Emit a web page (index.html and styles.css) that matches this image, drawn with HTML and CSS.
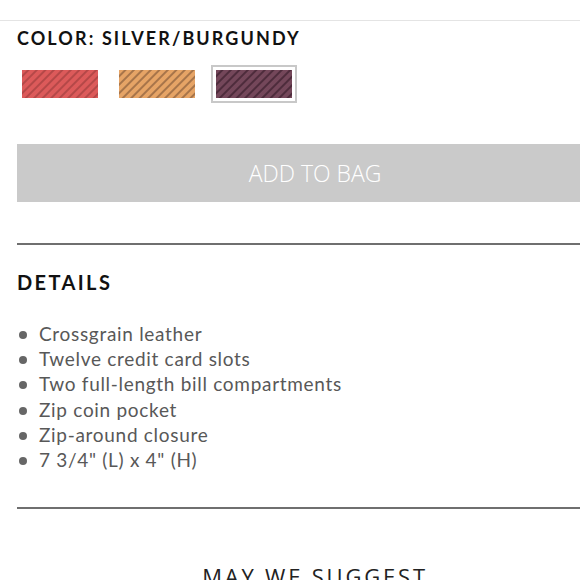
FILE: index.html
```html
<!DOCTYPE html>
<html lang="en">

<head>
    <meta charset="utf-8">
    <meta name="viewport" content="width=device-width, initial-scale=1.0">
    <title>Wallet - Silver/Burgundy</title>
    <link rel="stylesheet" href="styles.css">
</head>

<body>
    <div class="top-rule"></div>
    <div class="product">
        <h2 class="color-label">COLOR: SILVER/BURGUNDY</h2>
        <div class="swatches">
            <button class="swatch"><span class="chip chip-red"></span></button>
            <button class="swatch"><span class="chip chip-tan"></span></button>
            <button class="swatch selected"><span class="chip chip-burgundy"></span></button>
        </div>
        <button class="add-to-bag">ADD TO BAG</button>
        <hr class="rule">
        <h2 class="details-title">DETAILS</h2>
        <ul class="details">
            <li>Crossgrain leather</li>
            <li>Twelve credit card slots</li>
            <li>Two full-length bill compartments</li>
            <li>Zip coin pocket</li>
            <li>Zip-around closure</li>
            <li>7 3/4" (L) x 4" (H)</li>
        </ul>
        <hr class="rule rule-bottom">
        <h3 class="suggest">MAY WE SUGGEST</h3>
    </div>
</body>

</html>
```

FILE: styles.css
```css
html,
body {
    margin: 0;
    padding: 0;
    background: #fff;
    overflow: hidden;
}

body {
    font-family: Lato, "Liberation Sans", sans-serif;
    color: #111;
}

.top-rule {
    height: 1px;
    margin-top: 20px;
    background: #e4e4e4;
}

.product {
    width: 596px;
    margin-left: 17px;
}

.color-label {
    margin: 6px 0 0;
    font-size: 18px;
    line-height: 22px;
    font-weight: 700;
    letter-spacing: 2.1px;
}

.swatches {
    display: flex;
    gap: 11px;
    margin-top: 16px;
}

.swatch {
    display: block;
    padding: 3px;
    margin: 0;
    border: 2px solid transparent;
    background: #fff;
}

.swatch.selected {
    border-color: #c8c8c8;
}

.chip {
    display: block;
    width: 76px;
    height: 28px;
}

.chip-red {
    background: repeating-linear-gradient(135deg, #dc5a5a 0, #dc5a5a 3px, #b54848 4px, #b54848 5px, #dc5a5a 6px);
}

.chip-tan {
    background: repeating-linear-gradient(135deg, #e6a466 0, #e6a466 3px, #a8754a 4px, #a8754a 5px, #e6a466 6px);
}

.chip-burgundy {
    background: repeating-linear-gradient(135deg, #74475a 0, #74475a 3px, #4e2c3c 4px, #4e2c3c 5px, #74475a 6px);
}

.add-to-bag {
    display: block;
    width: 100%;
    height: 58px;
    margin-top: 41px;
    border: none;
    background: #cacaca;
    color: #fff;
    font-family: "Open Sans", "Liberation Sans", sans-serif;
    font-weight: 300;
    font-size: 23px;
}

.rule {
    height: 2px;
    margin: 41px 0 0;
    border: none;
    background: #6f6f6f;
}

.rule-bottom {
    margin-top: 35px;
}

.details-title {
    margin: 25px 0 0;
    font-size: 20px;
    line-height: 24px;
    font-weight: 700;
    letter-spacing: 2.4px;
}

.details {
    list-style: none;
    margin: 27px 0 0;
    padding: 0;
}

.details li {
    position: relative;
    padding-left: 22px;
    font-size: 19px;
    line-height: 25.2px;
    color: #585858;
    letter-spacing: 0.7px;
}

.details li::before {
    content: "";
    position: absolute;
    left: 2px;
    top: 10px;
    width: 8px;
    height: 8px;
    border-radius: 50%;
    background: #666;
}

.suggest {
    margin: 52px 0 0;
    text-align: center;
    font-family: "Open Sans", "Liberation Sans", sans-serif;
    font-weight: 400;
    font-size: 22px;
    letter-spacing: 2.8px;
    color: #222;
}
```
